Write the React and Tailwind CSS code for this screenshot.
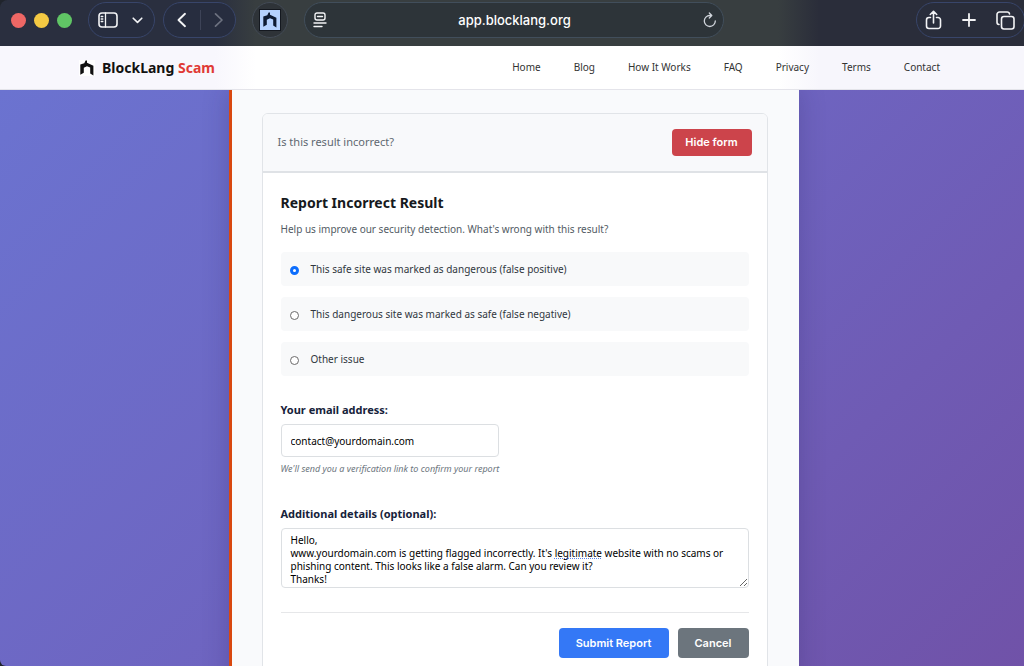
import { useState } from "react";

function LogoMark({ className }) {
  return (
    <svg viewBox="0 0 16 16" className={className} aria-hidden="true">
      <path d="M1.300 4.600 L5.300 3.200 L6.600 0.500 L8 0.500 V2.800 L14.400 5.800 V15.600 L11.200 13.600 V7.600 L8 6.200 L4.800 7.800 V12.800 L1.300 14.800 Z" fill="currentColor" />
    </svg>
  );
}

const stroke = { fill: "none", stroke: "currentColor", strokeLinecap: "round", strokeLinejoin: "round" };

function BrowserBar() {
  return (
    <header className="flex h-[46px] shrink-0 items-start rounded-tl-lg bg-[linear-gradient(90deg,#2a2f3f_0%,#2a2f3f_21%,#383e40_25%,#383e40_76%,#2a2d3a_80%,#2a2d3a_100%)] pt-[2px] text-gray-100">
      <div className="flex h-9 items-center gap-2 pl-[11px]">
        <span className="size-[15px] rounded-full bg-[#ee6765]" />
        <span className="size-[15px] rounded-full bg-[#f4c943]" />
        <span className="size-[15px] rounded-full bg-[#60c565]" />
      </div>
      <div className="ml-4 flex h-9 w-[67px] items-center gap-[14px] rounded-full border border-[#38456a] bg-[#272d3f] pl-[9px]">
        <button aria-label="Sidebar">
          <svg width="20" height="16" viewBox="0 0 20 16" {...stroke} strokeWidth="1.6">
            <rect x="1" y="1" width="18" height="14" rx="3" />
            <path d="M7.500 1v14M3.200 4.500h1.600M3.200 7h1.600M3.200 9.500h1.600" strokeWidth="1.3" />
          </svg>
        </button>
        <button aria-label="Tab groups">
          <svg width="11" height="7" viewBox="0 0 11 7" {...stroke} strokeWidth="1.6"><path d="M1.200 1.200 5.500 5.400 9.800 1.200" /></svg>
        </button>
      </div>
      <div className="ml-2 flex h-9 w-[73px] items-center rounded-full border border-[#38456a] bg-[#272d3f] pl-3">
        <button aria-label="Back">
          <svg width="12" height="16" viewBox="0 0 12 16" {...stroke} strokeWidth="1.9"><path d="M9 1.800 2.500 8 9 14.200" /></svg>
        </button>
        <span className="ml-3 h-5 w-px bg-[#3d4357]" />
        <button aria-label="Forward" className="ml-3 text-[#6d7280]">
          <svg width="12" height="16" viewBox="0 0 12 16" {...stroke} strokeWidth="1.7"><path d="M2.500 1.800 9 8 2.500 14.200" /></svg>
        </button>
      </div>
      <button aria-label="Site extension" className="ml-4 flex size-9 items-center justify-center rounded-full border border-[#434b56] bg-[#2e3338]">
        <span className="flex size-[22px] items-center justify-center border border-[#14181f] bg-[#b4d1ff] text-[#0d1a33]"><LogoMark className="size-4" /></span>
      </button>
      <div className="ml-4 flex h-9 w-[420px] items-center rounded-full border border-[#414e5b] bg-[#2d3439] pr-[5px] pl-2">
        <button aria-label="Reader">
          <svg width="14" height="16" viewBox="0 0 14 16" {...stroke} strokeWidth="1.4">
            <rect x="2" y="1" width="10" height="7" rx="2" />
            <path d="M4.500 4.500h5M1 11h12M1 14.500h8" />
          </svg>
        </button>
        <input aria-label="Address" defaultValue="app.blocklang.org" className="min-w-0 flex-1 bg-transparent pt-px text-center font-['Inter',sans-serif] text-[13px] font-medium text-white outline-none" />
        <button aria-label="Reload">
          <svg width="16" height="18" viewBox="0 0 16 18" {...stroke} strokeWidth="1.3" className="text-gray-300">
            <path d="M13.300 10A5.500 5.500 0 1 1 7.800 4.500h1.700M7.300 2l2.500 2.500L7.300 7" />
          </svg>
        </button>
      </div>
      <div className="-mr-px ml-auto flex h-9 w-[109px] shrink-0 items-center justify-between rounded-full border border-[#38456a] bg-[#292d3b] pr-[9px] pl-2">
        <button aria-label="Share">
          <svg width="17" height="20" viewBox="0 0 17 20" {...stroke} strokeWidth="1.6">
            <path d="M5.500 7.500H4A2.500 2.500 0 0 0 1.500 10v6A2.500 2.500 0 0 0 4 18.500h9a2.500 2.500 0 0 0 2.500-2.500v-6A2.500 2.500 0 0 0 13 7.500h-1.500M8.500 13V1.500M5.300 4.500l3.200-3.200 3.200 3.200" />
          </svg>
        </button>
        <button aria-label="New tab">
          <svg width="14" height="14" viewBox="0 0 14 14" {...stroke} strokeWidth="1.8"><path d="M7 1v12M1 7h12" /></svg>
        </button>
        <button aria-label="Tab overview">
          <svg width="19" height="19" viewBox="0 0 19 19" {...stroke} strokeWidth="1.6">
            <rect x="5.500" y="5.500" width="12.500" height="12.500" rx="2.500" />
            <path d="M3 13.500A2.300 2.300 0 0 1 1 11.200V3.500A2.500 2.500 0 0 1 3.500 1h7.700a2.300 2.300 0 0 1 2.300 2" />
          </svg>
        </button>
      </div>
    </header>
  );
}

const links = ["Home", "Blog", "How It Works", "FAQ", "Privacy", "Terms", "Contact"];

function SiteNav() {
  return (
    <nav className="flex h-11 shrink-0 items-center justify-between border-b border-[#e4e4ea] bg-[linear-gradient(90deg,#f8f7fd_0%,#f8f7fd_21%,#ffffff_25%,#ffffff_76%,#f7f6fc_80%,#f7f6fc_100%)] pr-[84px] pl-[79px]">
      <a href="#home" className="flex items-center gap-[7px] text-[14px] font-bold text-[#111]">
        <span className="bg-white"><LogoMark className="size-4" /></span>
        <span>BlockLang <span className="text-[#e03a35]">Scam</span></span>
      </a>
      <ul className="flex gap-[33px] text-[10px] text-[#333]">
        {links.map((l) => <li key={l}><a href="#top">{l}</a></li>)}
      </ul>
    </nav>
  );
}

const reasons = [
  "This safe site was marked as dangerous (false positive)",
  "This dangerous site was marked as safe (false negative)",
  "Other issue",
];

const message = `Hello,
www.yourdomain.com is getting flagged incorrectly. It's legitimate website with no scams or
phishing content. This looks like a false alarm. Can you review it?
Thanks!`;

function ReportForm() {
  const [reason, setReason] = useState(0);
  return (
    <form className="px-[18px] pt-5 pb-6" onSubmit={(e) => e.preventDefault()}>
      <h2 className="text-[14px] leading-5 font-bold text-[#16191d]">Report Incorrect Result</h2>
      <p className="mt-2 text-[10px] leading-4 text-[#525b64]">Help us improve our security detection. What's wrong with this result?</p>
      <fieldset className="mt-[15px] flex flex-col gap-[11px]">
        {reasons.map((r, i) => (
          <label key={r} className="flex h-[34px] items-center gap-3 rounded bg-[#f8f9fa] px-[9px] text-[10px] text-[#30373e]">
            <input
              type="radio"
              name="reason"
              checked={reason === i}
              onChange={() => setReason(i)}
              className="mt-[2px] size-[9px] appearance-none rounded-full border border-[#6b6b6b] bg-white checked:border-[3px] checked:border-[#0d6efd]"
            />
            {r}
          </label>
        ))}
      </fieldset>
      <label htmlFor="email" className="mt-[26px] block text-[11px] leading-4 font-bold text-[#16223a]">Your email address:</label>
      <input id="email" type="email" defaultValue="contact@yourdomain.com" className="mt-[6px] block h-[33px] w-[218px] rounded border border-[#dcdfe2] bg-white px-[9px] text-[10px] text-black outline-none" />
      <p className="mt-1 text-[9px] leading-4 text-[#6c757d] italic">We'll send you a verification link to confirm your report</p>
      <label htmlFor="details" className="mt-[29px] block text-[11px] leading-4 font-bold text-[#16223a]">Additional details (optional):</label>
      <div className="relative mt-[6px]">
        <textarea id="details" defaultValue={message} className="block h-[60px] w-full resize overflow-hidden rounded border border-[#dcdfe2] bg-white px-[9px] pt-[5px] text-[10px] leading-[13px] text-black outline-none" />
        <span className="absolute top-[30px] left-[273px] w-[47px] border-b border-dotted border-[#5b86e5]" />
      </div>
      <div className="mt-6 flex justify-end gap-[9px] border-t border-[#e6e7e9] pt-[15px] font-['Inter',sans-serif] text-[11px] font-semibold text-white">
        <button type="submit" className="h-[30px] w-[110px] rounded bg-[#3478f6]">Submit Report</button>
        <button type="button" className="h-[30px] w-[71px] rounded bg-[#6c757d]">Cancel</button>
      </div>
    </form>
  );
}

export default function App() {
  return (
    <div className="flex h-screen flex-col overflow-hidden bg-[#20242c] font-['Noto_Sans',sans-serif]">
      <BrowserBar />
      <SiteNav />
      <main className="flex-1 overflow-hidden rounded-bl-md bg-[linear-gradient(135deg,#6b73d0_0%,#6e64c0_50%,#7052a8_100%)] pl-[3px]">
        <div className="mx-auto min-h-full w-full max-w-[570px] border-l-[3px] border-[#d9480f] bg-[#f9fafc] pt-[23px] pr-[31px] pl-[30px] shadow-[0_0_24px_rgba(40,30,90,0.25)]">
          <section className="overflow-hidden rounded-t-md border border-[#e1e4e8] bg-white">
            <div className="flex h-[59px] items-center justify-between border-b-2 border-[#dfe2e6] bg-[#f8f9fb] px-[15px]">
              <span className="text-[11px] text-[#5f6871]">Is this result incorrect?</span>
              <button className="h-[27px] w-20 rounded bg-[#cc444b] font-['Inter',sans-serif] text-[11px] font-semibold text-white">Hide form</button>
            </div>
            <ReportForm />
          </section>
        </div>
      </main>
    </div>
  );
}
